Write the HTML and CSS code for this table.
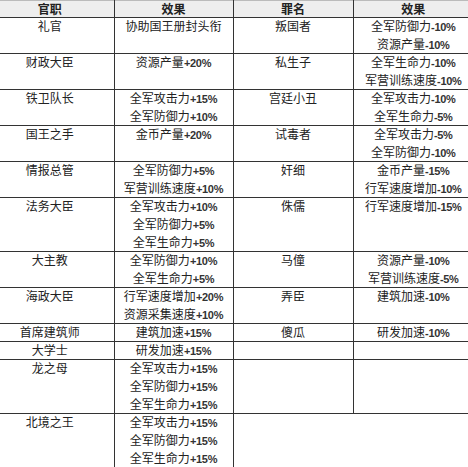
FILE: index.html
```html
<!DOCTYPE html>
<html lang="zh-CN">
<head>
<meta charset="utf-8">
<title>官职与罪名</title>
<link rel="stylesheet" href="styles.css">
</head>
<body>
<table class="grid">
  <colgroup>
    <col class="c1"><col class="c2"><col class="c3"><col class="c4">
  </colgroup>
  <thead>
    <tr>
      <th class="name">官职</th>
      <th class="eff mid">效果</th>
      <th class="crime">罪名</th>
      <th class="eff2">效果</th>
    </tr>
  </thead>
  <tbody>
    <tr>
      <td class="name">礼官</td>
      <td class="eff mid">协助国王册封头衔</td>
      <td class="crime">叛国者</td>
      <td class="eff2">全军防御力<span class="num">-10%</span><br>资源产量<span class="num">-10%</span></td>
    </tr>
    <tr>
      <td class="name">财政大臣</td>
      <td class="eff mid">资源产量<span class="num">+20%</span></td>
      <td class="crime">私生子</td>
      <td class="eff2">全军生命力<span class="num">-10%</span><br>军营训练速度<span class="num">-10%</span></td>
    </tr>
    <tr>
      <td class="name">铁卫队长</td>
      <td class="eff mid">全军攻击力<span class="num">+15%</span><br>全军防御力<span class="num">+10%</span></td>
      <td class="crime">宫廷小丑</td>
      <td class="eff2">全军攻击力<span class="num">-10%</span><br>全军生命力<span class="num">-5%</span></td>
    </tr>
    <tr>
      <td class="name">国王之手</td>
      <td class="eff mid">金币产量<span class="num">+20%</span></td>
      <td class="crime">试毒者</td>
      <td class="eff2">全军攻击力<span class="num">-5%</span><br>全军防御力<span class="num">-10%</span></td>
    </tr>
    <tr>
      <td class="name">情报总管</td>
      <td class="eff mid">全军防御力<span class="num">+5%</span><br>军营训练速度<span class="num">+10%</span></td>
      <td class="crime">奸细</td>
      <td class="eff2">金币产量<span class="num">-15%</span><br>行军速度增加<span class="num">-10%</span></td>
    </tr>
    <tr>
      <td class="name">法务大臣</td>
      <td class="eff mid">全军攻击力<span class="num">+10%</span><br>全军防御力<span class="num">+5%</span><br>全军生命力<span class="num">+5%</span></td>
      <td class="crime">侏儒</td>
      <td class="eff2">行军速度增加<span class="num">-15%</span></td>
    </tr>
    <tr>
      <td class="name">大主教</td>
      <td class="eff mid">全军防御力<span class="num">+10%</span><br>全军生命力<span class="num">+5%</span></td>
      <td class="crime">马僮</td>
      <td class="eff2">资源产量<span class="num">-10%</span><br>军营训练速度<span class="num">-5%</span></td>
    </tr>
    <tr>
      <td class="name">海政大臣</td>
      <td class="eff mid">行军速度增加<span class="num">+20%</span><br>资源采集速度<span class="num">+10%</span></td>
      <td class="crime">弄臣</td>
      <td class="eff2">建筑加速<span class="num">-10%</span></td>
    </tr>
    <tr>
      <td class="name">首席建筑师</td>
      <td class="eff mid">建筑加速<span class="num">+15%</span></td>
      <td class="crime">傻瓜</td>
      <td class="eff2">研发加速<span class="num">-10%</span></td>
    </tr>
    <tr>
      <td class="name">大学士</td>
      <td class="eff mid">研发加速<span class="num">+15%</span></td>
      <td class="crime"></td>
      <td class="eff2"></td>
    </tr>
    <tr>
      <td class="name">龙之母</td>
      <td class="eff mid">全军攻击力<span class="num">+15%</span><br>全军防御力<span class="num">+15%</span><br>全军生命力<span class="num">+15%</span></td>
      <td class="crime"></td>
      <td class="eff2"></td>
    </tr>
    <tr class="last">
      <td class="name">北境之王</td>
      <td class="eff mid">全军攻击力<span class="num">+15%</span><br>全军防御力<span class="num">+15%</span><br>全军生命力<span class="num">+15%</span></td>
      <td class="crime blank"></td>
      <td class="eff2 blank"></td>
    </tr>
  </tbody>
</table>
</body>
</html>
```

FILE: styles.css
```css
html, body {
  margin: 0;
  padding: 0;
  background: #ffffff;
}

body {
  width: 468px;
  height: 467px;
  overflow: hidden;
  font-family: "Noto Sans CJK SC", "Noto Sans", sans-serif;
  font-size: 12px;
  color: #222222;
}

.grid {
  width: 468px;
  border-collapse: collapse;
  border-spacing: 0;
  table-layout: fixed;
}

.c1 { width: 114px; }
.c2 { width: 119px; }
.c3 { width: 120px; }
.c4 { width: 115px; }

.grid th,
.grid td {
  padding: 0;
  line-height: 18px;
  text-align: center;
  vertical-align: top;
  white-space: nowrap;
  border: none;
  /* horizontal rule drawn inside the cell so it does not add to row height */
  background: linear-gradient(#333333, #333333) no-repeat left top / 100% 1px;
}

.grid th {
  height: 17px;
  line-height: 17px;
  font-weight: bold;
  background: linear-gradient(#bbbbbb, #bbbbbb) no-repeat left top / 100% 1px, #eeeeee;
}

.grid .name {
  padding-right: 14px;
}

.grid .mid {
  border-left: 1px solid #333333;
  border-right: 1px solid #333333;
}

.grid .crime {
  border-right: 1px solid #333333;
}

.grid .eff2 {
  padding-left: 5px;
}

.grid .last .blank {
  border-right: none;
}

.num {
  font-family: "Liberation Sans", sans-serif;
  font-size: 11px;
  line-height: 10px;
  font-weight: bold;
  letter-spacing: -0.3px;
  color: #333333;
}
```
